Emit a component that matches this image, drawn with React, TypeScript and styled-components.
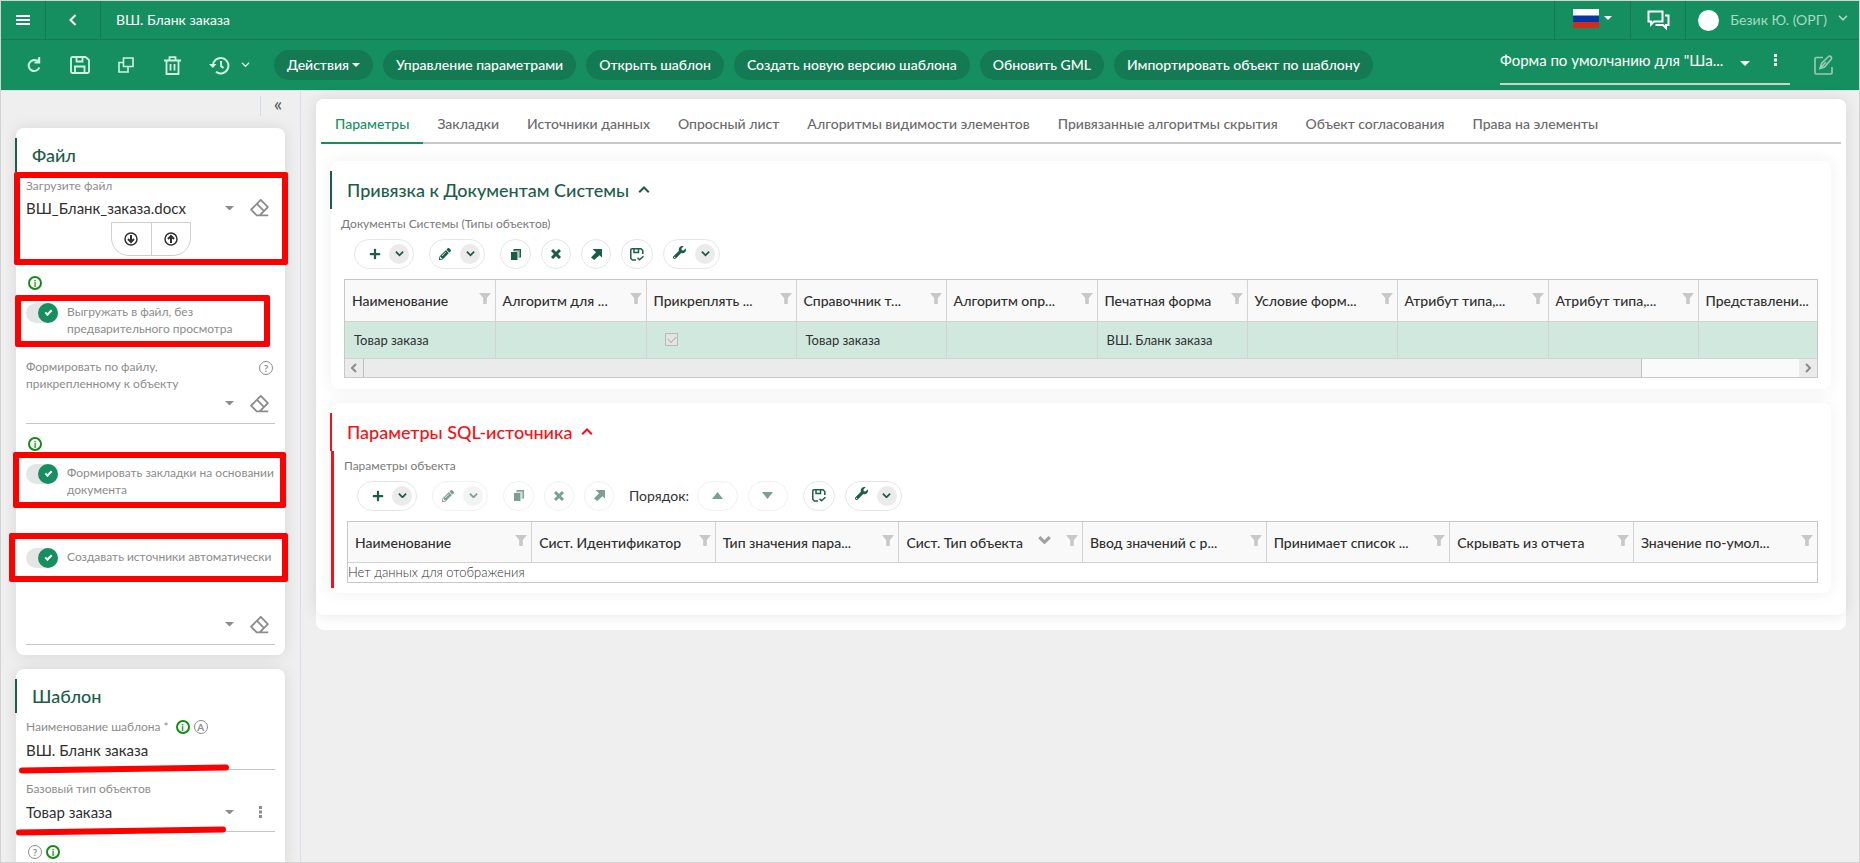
import React from 'react';
import styled, { createGlobalStyle, css } from 'styled-components';
import { FaPlus, FaPencilAlt, FaWrench } from 'react-icons/fa';
import { RiEraserLine } from 'react-icons/ri';

const green = '#168f60';
const pillGreen = '#137a53';
const darkGreen = '#1c5d48';
const mint = '#cdf5e1';
const grey = '#8c8c8c';
const line = '#d3d3d3';
const alarm = '#f90f14';
const marker = '#fe0000';

const Global = createGlobalStyle`
  *, *::before, *::after { box-sizing: border-box; }
  body { margin: 0; background: #efefef; color: #303030; font: 400 14px/20px Lato, Roboto, sans-serif; }
  button, input, select { font: inherit; color: inherit; background: none; border: 0; padding: 0; margin: 0; outline: 0; }
  select { appearance: none; cursor: pointer; }
  button { cursor: pointer; }
  h2, p { margin: 0; }
  svg { display: block; flex: none; }
`;

/* ---------- icons ---------- */

const Chevron = ({ size = 10, width = 2, up = false }: { size?: number; width?: number; up?: boolean }) => (
  <svg width={size} height={size * 0.6} viewBox="0 0 10 6" fill="none" stroke="currentColor" strokeWidth={width}>
    <path d={up ? 'M1 5.2 5 1.2l4 4' : 'M1 .8l4 4 4-4'} />
  </svg>
);
const Caret = ({ size = 8 }: { size?: number }) => (
  <svg width={size} height={size / 2} viewBox="0 0 8 4" fill="currentColor"><path d="M0 0h8L4 4z" /></svg>
);
const Dots = () => (
  <svg width="3" height="12" viewBox="0 0 3 12" fill="currentColor">
    <path d="M0 0h3v3H0zM0 4.500h3v3H0zM0 9h3v3H0z" />
  </svg>
);
const Stroke = ({ w = 20, h = 20, width = 2, children }: { w?: number; h?: number; width?: number; children: React.ReactNode }) => (
  <svg width={w} height={h} viewBox={`0 0 ${w} ${h}`} fill="none" stroke="currentColor" strokeWidth={width}>{children}</svg>
);
const Menu = () => <Stroke w={14} h={12} width={2}><path d="M0 2h14M0 6h14M0 10h14" /></Stroke>;
const Back = () => <Stroke w={8} h={12} width={2}><path d="M6.500 1 1.500 6l5 5" /></Stroke>;
const Refresh = () => (
  <Stroke w={14} h={16}><path d="M10.500 4.200A5.500 5.500 0 1 0 12.300 10.500" /><path d="M12.200 0v5.500H7.500M11.500 2v3" /></Stroke>
);
const Save = () => (
  <Stroke w={20} h={18} width={1.8}>
    <path d="M1 2.500A1.500 1.500 0 0 1 2.500 1h13L19 4v11.500A1.500 1.500 0 0 1 17.500 17h-15A1.500 1.500 0 0 1 1 15.500zM6.500 1v4.500h6V1M5 17v-6.500h9.500V17" />
  </Stroke>
);
const Copy = () => <Stroke w={16} h={16} width={1.6}><path d="M5.500 1h9.500v8.500H5.500zM5.500 5.500H1V15h9V9.500" /></Stroke>;
const Trash = () => <Stroke w={17} h={19} width={1.8}><path d="M0 4.500h17M2.500 4.500V18h12V4.500M5.500 4V1.200h6V4M6.500 8v6.500M10.500 8v6.500" /></Stroke>;
const History = () => (
  <Stroke w={21} h={19}>
    <path d="M4 10a7.700 7.700 0 1 1 3 5.800M12 5v5l2.500 2" /><path d="M0 8h7.500L3.800 12z" fill="currentColor" stroke="none" />
  </Stroke>
);
const Chat = () => (
  <Stroke w={23} h={20}>
    <path d="M1.500 1.500h14v10H7L4 14.500v-3H1.500z" /><path d="M18 5.500h3.500V15H19v3l-3-3H9.500v-1" />
  </Stroke>
);
const Edit = () => (
  <Stroke w={19} h={20} width={1.6}>
    <path d="M9 2.500H2a1 1 0 0 0-1 1V18a1 1 0 0 0 1 1h15a1 1 0 0 0 1-1v-6" />
    <path d="M6 13.500l1.500-5L14.500 1.500q1.500-1 2.500.2t.2 2.500L10.500 12zM6 13.500 12 7" />
  </Stroke>
);
const Flag = () => (
  <svg width="26" height="19" viewBox="0 0 26 19">
    <path fill="#fff" d="M0 0h26v7H0z" /><path fill="#0039a6" d="M0 6.500h26v7H0z" /><path fill="#d52b1e" d="M0 13h26v6H0z" />
  </svg>
);
const CopySolid = () => (
  <svg width="10" height="11" viewBox="0 0 10 11" fill="currentColor">
    <path d="M0 3h6.500v8H0z" /><path d="M2.500 0H10v8.500H7.500V7.500H9V1.500H3.500V2.500h-1z" /><path d="M4 1.500h5v6H7.500v-5H4z" opacity=".6" />
  </svg>
);
const Cross = () => <Stroke w={10} h={10} width={3}><path d="M1 1l8 8M9 1 1 9" /></Stroke>;
const ArrowOut = () => (
  <svg width="11" height="11" viewBox="0 0 11 11">
    <path fill="currentColor" d="M1.500 0H11v8.500L8.500 6.200 3.200 11 0 8.500 5 3.200z" />
  </svg>
);
const SaveCheck = () => (
  <Stroke w={14} h={13} width={1.5}>
    <path d="M6 12H2.500L.8 10.500V2q0-1.200 1.200-1.200h9L12.800 2.500V6M4 1v3.500h4.500V1M7.500 9.800l2 2 4-3.600" />
  </Stroke>
);
const ArrowRound = ({ up = false }: { up?: boolean }) => (
  <Stroke w={14} h={14} width={1.5}>
    <circle cx="7" cy="7" r="6" /><path strokeWidth="2" d={up ? 'M7 11V4M4 7l3-3 3 3' : 'M7 3v7M4 7l3 3 3-3'} />
  </Stroke>
);
const Triangle = ({ up = false }: { up?: boolean }) => (
  <svg width="11" height="7" viewBox="0 0 11 7"><path fill="currentColor" d={up ? 'M0 7h11L5.500 0z' : 'M0 0h11L5.500 7z'} /></svg>
);
const Funnel = () => (
  <svg width="12" height="11" viewBox="0 0 12 11"><path fill="currentColor" d="M0 0h12L7.800 5v6H4.200V5z" /></svg>
);

/* ---------- header ---------- */

const Shell = styled.div`
  height: 100vh;
  display: flex;
  flex-direction: column;
  overflow: hidden;
  border: 1px solid ${line};
`;
const TopBar = styled.header`
  flex: none;
  height: 39px;
  display: flex;
  background: ${green};
  color: #fff;
  border-bottom: 1px solid ${pillGreen};
`;
const TopCell = styled.button<{ $w: number; $left?: boolean }>`
  width: ${p => p.$w}px;
  display: flex;
  align-items: center;
  justify-content: center;
  gap: 5px;
  ${p => (p.$left ? 'border-left' : 'border-right')}: 1px solid ${pillGreen};
`;
const PageName = styled.div`
  flex: 1;
  align-self: center;
  padding-left: 15px;
`;
const CaretLift = styled.span`
  padding-bottom: 5px;
`;
const FlagCell = styled(TopCell)`
  padding-bottom: 4px;
`;
const User = styled.button`
  display: flex;
  align-items: center;
  gap: 11px;
  padding: 0 11px 0 12px;
  border-left: 1px solid ${pillGreen};
  color: #a9d9c4;
`;
const UserName = styled.span`
  font-size: 14px;
`;
const Avatar = styled.span`
  width: 21px;
  height: 21px;
  border-radius: 50%;
  background: #fff;
`;
const ActionBar = styled.div`
  flex: none;
  height: 51px;
  display: flex;
  align-items: center;
  background: ${green};
  color: #fff;
  border-bottom: 1px solid #dae1ec;
`;
const IconTools = styled.div`
  display: flex;
  align-items: center;
  padding-left: 10px;
  width: 273px;
`;
const IconTool = styled.button<{ $wide?: boolean }>`
  width: ${p => (p.$wide ? 68 : 46)}px;
  height: 32px;
  display: flex;
  align-items: center;
  justify-content: center;
  gap: 11px;
  color: ${mint};
`;
const Pills = styled.div`
  display: flex;
  gap: 10px;
`;
const Pill = styled.button`
  height: 30px;
  padding: 0 13px;
  border-radius: 15px;
  background: ${pillGreen};
  font-weight: 500;
  white-space: nowrap;
  display: flex;
  align-items: center;
  gap: 3px;
`;
const FormPicker = styled.div`
  margin-left: auto;
  width: 290px;
  height: 40px;
  padding: 0 13px 8px 0;
  display: flex;
  align-items: center;
  border-bottom: 2px solid #c9d3cd;
`;
const FormSelect = styled.select`
  flex: 1;
  min-width: 0;
  font-size: 15px;
`;
const PickerIcons = styled.div`
  display: flex;
  align-items: center;
  gap: 24px;
`;
const CaretDrop = styled.span`
  padding-top: 6px;
`;
const EditButton = styled.button`
  margin: 0 26px 0 24px;
  opacity: 0.55;
`;

/* ---------- sidebar ---------- */

const Body = styled.div`
  flex: 1;
  min-height: 0;
  display: flex;
`;
const Sidebar = styled.aside`
  flex: none;
  width: 300px;
  padding: 0 15px;
  overflow: hidden;
  border-right: 1px solid #d9dfe9;
`;
const CollapseRow = styled.div`
  height: 37px;
  display: flex;
  justify-content: flex-end;
  padding-top: 5px;
`;
const Collapse = styled.button`
  width: 25px;
  height: 20px;
  border-left: 1px solid #d3dbe8;
  font-size: 20px;
  line-height: 14px;
  padding: 0 0 6px 10px;
  color: #555;
`;
const SideCard = styled.section`
  border-radius: 8px;
  background: #fff;
  padding: 10px 0;
  margin-bottom: 14px;
  box-shadow: 0 0 15px rgba(0, 0, 0, 0.1);
`;
const SideTitle = styled.h2`
  margin-left: -1px;
  border-left: 2px solid ${darkGreen};
  padding-left: 15px;
  font-size: 18px;
  font-weight: 500;
  line-height: 34px;
  color: ${darkGreen};
`;
const SideBody = styled.div`
  padding: 0 10px;
`;
const small = css`
  font-size: 12px;
  line-height: 17px;
  color: ${grey};
`;
const Label = styled.label`
  ${small}
`;
const LabelRow = styled.div<{ $top?: number }>`
  display: flex;
  justify-content: space-between;
  padding-top: ${p => p.$top ?? 5}px;
`;
const InlineLabel = styled.div`
  display: flex;
  align-items: center;
  gap: 5px;
  padding-top: 5px;
  height: 22px;
`;
const ControlRow = styled.div<{ $h: number; $line?: boolean; $low?: boolean; $top?: number }>`
  display: flex;
  align-items: center;
  height: ${p => p.$h}px;
  margin-top: ${p => p.$top ?? 0}px;
  padding-right: 4px;
  color: ${grey};
  ${p => p.$line && css`
    padding-bottom: ${p.$low ? 4 : 8}px;
    border-bottom: 1px solid #c6c6c6;
  `}
`;
const valueText = css`
  flex: 1;
  min-width: 0;
  font-size: 15px;
  color: #303030;
`;
const ValueSelect = styled.select`
  ${valueText}
`;
const ValueInput = styled.input`
  ${valueText}
`;
const RowIcon = styled.button`
  width: 37px;
  display: flex;
  justify-content: flex-end;
`;
const DotsButton = styled.button`
  width: 37px;
  display: flex;
  justify-content: center;
  padding-left: 15px;
`;
const Transfer = styled.div`
  display: flex;
  width: 80px;
  height: 34px;
  margin-left: 85px;
  border: 1px solid #cfcfcf;
  border-radius: 0 0 18px 18px;
`;
const TransferButton = styled.button`
  flex: 1;
  display: flex;
  align-items: center;
  justify-content: center;
  & + & { border-left: 1px solid #cfcfcf; }
`;
const HintRow = styled.div<{ $top?: number }>`
  display: flex;
  gap: 4px;
  padding-left: 2px;
  margin-top: ${p => p.$top ?? 0}px;
`;
const Hint = styled.span<{ $info?: boolean }>`
  flex: none;
  width: 14px;
  height: 14px;
  border-radius: 50%;
  border: ${p => (p.$info ? '2px solid #138c13' : '1px solid #8c8c8c')};
  color: ${p => (p.$info ? '#138c13' : '#8c8c8c')};
  display: flex;
  align-items: center;
  justify-content: center;
  font-size: 10px;
  font-weight: 700;
  line-height: 10px;
`;
const HelpHint = styled(Hint)`
  margin: 3px 2px 0 0;
`;
const SwitchRow = styled.label<{ $top: number }>`
  ${small}
  display: flex;
  align-items: flex-start;
  gap: 9px;
  min-height: 34px;
  margin: ${p => p.$top}px -8px 0 0;
`;
const Switch = styled.input`
  appearance: none;
  flex: none;
  position: relative;
  width: 32px;
  height: 20px;
  border-radius: 10px;
  background: #e2e6e7;
  &::before {
    content: '';
    position: absolute;
    inset: 0 0 0 12px;
    border-radius: 50%;
    background: ${green};
  }
  &::after {
    content: '';
    position: absolute;
    left: 19px;
    top: 7px;
    width: 7px;
    height: 4px;
    border: solid #fff;
    border-width: 0 0 2px 2px;
    transform: rotate(-45deg);
  }
`;

/* Hand-drawn red marks lying over the form */
const Marked = styled.div`
  position: relative;
`;
const Frame = styled.span<{ $box: string }>`
  position: absolute;
  z-index: 2;
  inset: ${p => p.$box};
  border: 6px solid ${marker};
  border-radius: 2px;
  pointer-events: none;
`;
const Underline = styled.svg`
  position: absolute;
  z-index: 2;
  left: -12px;
  bottom: -6px;
  pointer-events: none;
`;
const RedStroke = ({ shift = 0 }: { shift?: number }) => (
  <Underline width="216" height="14" viewBox="0 0 216 14">
    <path d={`M${5 + shift} 8.500 L${209 + shift} 5.500`} stroke={marker} strokeWidth="6" strokeLinecap="round" />
  </Underline>
);

/* ---------- main area ---------- */

const Main = styled.main`
  flex: 1;
  min-width: 0;
  padding: 8px 13px 0 15px;
`;
const OuterCard = styled.div`
  border-radius: 8px;
  background: #fff;
  padding-bottom: 15px;
`;
const MainCard = styled.div`
  border-radius: 8px;
  background: #fff;
  padding-bottom: 22px;
  box-shadow: 0 0 15px rgba(0, 0, 0, 0.1);
`;
const Tabs = styled.nav`
  display: flex;
  margin: 0 5px;
  padding-top: 4px;
  border-bottom: 2px solid #c8c8c8;
`;
const Tab = styled.a<{ $active?: boolean }>`
  padding: 11px 14px 8px;
  margin-bottom: -2px;
  font-weight: 500;
  text-decoration: none;
  white-space: nowrap;
  color: ${p => (p.$active ? green : '#6a6a6a')};
  border-bottom: 2px solid ${p => (p.$active ? green : 'transparent')};
`;
const Group = styled.section`
  margin: 17px 15px 0;
  padding: 10px 0 11px;
  border-radius: 8px;
  background: #fff;
  box-shadow: 0 0 15px rgba(50, 80, 70, 0.09);
  & + & { margin-top: 14px; padding-bottom: 5px; }
`;
const GroupTitle = styled.h2<{ $alarm?: boolean }>`
  display: flex;
  align-items: center;
  gap: 9px;
  height: 38px;
  margin-left: -1px;
  padding-left: 15px;
  border-left: 2px solid;
  font-size: 18px;
  font-weight: 500;
  color: ${p => (p.$alarm ? alarm : darkGreen)};
`;
const GroupBody = styled.div<{ $alarm?: boolean }>`
  padding: 6px 13px 0 10px;
  ${p => p.$alarm && css`
    border-left: 3px solid ${alarm};
    padding-bottom: 5px;
  `}
`;
const Caption = styled.p`
  ${small}
  color: #7a7a7a;
`;
const Tools = styled.div`
  display: flex;
  align-items: center;
  margin: 7px 0 10px 13px;
  color: ${darkGreen};
`;
const Tool = styled.button<{ $w: number; $gap?: number }>`
  width: ${p => p.$w}px;
  height: 30px;
  margin-right: ${p => p.$gap ?? 10}px;
  border: 1px solid #e6e6e6;
  border-radius: 15px;
  display: flex;
  align-items: center;
  justify-content: center;
  &:disabled { opacity: 0.58; }
`;
const SplitTool = styled(Tool)`
  justify-content: space-between;
  padding: 0 4px 0 9px;
`;
const AddTool = styled(SplitTool)`
  padding-left: 14px;
`;
const Drop = styled.span`
  width: 20px;
  height: 20px;
  border-radius: 50%;
  background: #ebebeb;
  display: flex;
  align-items: center;
  justify-content: center;
`;
const Order = styled.span`
  margin: 0 8px 0 5px;
  color: #333;
`;
const Lift = styled.span`
  padding-bottom: 4px;
`;
const GridFrame = styled.div`
  margin-left: 3px;
  border: 1px solid #c8c8c8;
  overflow: hidden;
`;
const Table = styled.table`
  width: 100%;
  table-layout: fixed;
  border-collapse: collapse;
`;
const Th = styled.th<{ $w?: number }>`
  width: ${p => (p.$w ? `${p.$w}px` : 'auto')};
  height: 41px;
  padding: 0 4px 0 7px;
  background: #f9f9f9;
  border-bottom: 1px solid ${line};
  font-weight: 500;
  text-align: left;
  white-space: nowrap;
  & + & { border-left: 1px solid ${line}; }
`;
const ThInner = styled.div`
  display: flex;
  align-items: center;
  justify-content: space-between;
`;
const ThText = styled.span`
  flex: 1;
  padding-top: 2px;
`;
const FilterMark = styled.span`
  padding-bottom: 3px;
  color: #c8c8c8;
`;
const SortMark = styled.span`
  padding: 0 15px 3px 0;
  color: #a0a0a0;
`;
const Td = styled.td`
  height: 37px;
  padding: 0 0 0 9px;
  background: #d1e8df;
  font-size: 13px;
  border-bottom: 1px solid ${line};
  & + & { border-left: 1px solid ${line}; }
`;
const EmptyTd = styled.td`
  height: 19px;
  padding: 0;
  font-size: 13px;
  font-weight: 300;
  line-height: 19px;
`;
const Tick = styled.input`
  appearance: none;
  display: block;
  position: relative;
  width: 13px;
  height: 13px;
  margin-left: 9px;
  border: 1px solid #b9b9b9;
  background: #e4e4e4;
  &::after {
    content: '';
    position: absolute;
    left: 2px;
    top: 2px;
    width: 8px;
    height: 5px;
    border: solid #b0b0b0;
    border-width: 0 0 1px 1px;
    transform: rotate(-45deg);
  }
`;
const Scroll = styled.div`
  display: flex;
  height: 18px;
  background: #fafafa;
  color: #8c8c8c;
`;
const ScrollEnd = styled.button`
  width: 18px;
  display: flex;
  align-items: center;
  justify-content: center;
  background: #ebebeb;
`;
const Thumb = styled.div`
  flex: 0 1 1279px;
  background: #ebebeb;
  border: solid #c0c0c0;
  border-width: 0 1px;
  margin-right: auto;
`;
const ScrollIcon = ({ right = false }: { right?: boolean }) => (
  <Stroke w={6} h={10}><path d={right ? 'M1 1l4 4-4 4' : 'M5 1 1 5l4 4'} /></Stroke>
);

/* ---------- data ---------- */

const tabs = ['Параметры', 'Закладки', 'Источники данных', 'Опросный лист', 'Алгоритмы видимости элементов',
  'Привязанные алгоритмы скрытия', 'Объект согласования', 'Права на элементы'];
const pills = ['Управление параметрами', 'Открыть шаблон', 'Создать новую версию шаблона', 'Обновить GML', 'Импортировать объект по шаблону'];
const docColumns = ['Наименование', 'Алгоритм для ...', 'Прикреплять ...', 'Справочник т...', 'Алгоритм опр...', 'Печатная форма',
  'Условие форм...', 'Атрибут типа,...', 'Атрибут типа,...', 'Представлени...'];
const docRow = ['Товар заказа', '', 'tick', 'Товар заказа', '', 'ВШ. Бланк заказа', '', '', '', ''];
const sqlColumns = ['Наименование', 'Сист. Идентификатор', 'Тип значения пара...', 'Сист. Тип объекта', 'Ввод значений с р...',
  'Принимает список ...', 'Скрывать из отчета', 'Значение по-умол...'];

const Filter = () => <FilterMark><Funnel /></FilterMark>;

const ToolSet = ({ locked = false }: { locked?: boolean }) => (
  <Tools>
    <AddTool $w={60} $gap={15} aria-label="Добавить"><FaPlus size={12} /><Drop><Chevron size={9} /></Drop></AddTool>
    <SplitTool $w={56} $gap={15} disabled={locked} aria-label="Изменить"><FaPencilAlt size={12} /><Drop><Chevron size={9} /></Drop></SplitTool>
    <Tool $w={31} disabled={locked} aria-label="Копировать"><CopySolid /></Tool>
    <Tool $w={30} disabled={locked} aria-label="Удалить"><Cross /></Tool>
    <Tool $w={30} disabled={locked} aria-label="Открыть"><ArrowOut /></Tool>
    {locked && (
      <>
        <Order>Порядок:</Order>
        <Tool $w={41} disabled aria-label="Выше"><Triangle up /></Tool>
        <Tool $w={40} $gap={15} disabled aria-label="Ниже"><Triangle /></Tool>
      </>
    )}
    <Tool $w={32} aria-label="Сохранить"><SaveCheck /></Tool>
    <SplitTool $w={57} aria-label="Настройки"><Lift><FaWrench size={13} /></Lift><Drop><Chevron size={9} /></Drop></SplitTool>
  </Tools>
);

const Clear = () => <RowIcon aria-label="Очистить"><RiEraserLine size={22} /></RowIcon>;

export default function App() {
  return (
    <Shell>
      <Global />
      <TopBar>
        <TopCell $w={45} aria-label="Меню"><Menu /></TopCell>
        <TopCell $w={55} aria-label="Назад"><Back /></TopCell>
        <PageName>ВШ. Бланк заказа</PageName>
        <FlagCell $w={76} $left aria-label="Язык"><Flag /><Caret /></FlagCell>
        <TopCell $w={55} $left aria-label="Сообщения"><Chat /></TopCell>
        <User><Avatar /><UserName>Безик Ю. (ОРГ)</UserName><CaretLift><Chevron size={10} width={1.6} /></CaretLift></User>
      </TopBar>
      <ActionBar>
        <IconTools>
          <IconTool aria-label="Обновить"><Refresh /></IconTool>
          <IconTool aria-label="Сохранить"><Save /></IconTool>
          <IconTool aria-label="Копировать"><Copy /></IconTool>
          <IconTool aria-label="Удалить"><Trash /></IconTool>
          <IconTool $wide aria-label="История"><History /><Chevron size={9} width={1.5} /></IconTool>
        </IconTools>
        <Pills>
          <Pill>Действия <Caret /></Pill>
          {pills.map(p => <Pill key={p}>{p}</Pill>)}
        </Pills>
        <FormPicker>
          <FormSelect aria-label="Форма"><option>Форма по умолчанию для "Ша...</option></FormSelect>
          <PickerIcons><CaretDrop><Caret size={10} /></CaretDrop><Dots /></PickerIcons>
        </FormPicker>
        <EditButton aria-label="Редактировать форму"><Edit /></EditButton>
      </ActionBar>

      <Body>
        <Sidebar>
          <CollapseRow><Collapse aria-label="Свернуть">«</Collapse></CollapseRow>
          <SideCard>
            <SideTitle>Файл</SideTitle>
            <SideBody>
              <Marked>
                <Frame $box="0 -13px -9px -12px" />
                <LabelRow><Label htmlFor="file">Загрузите файл</Label></LabelRow>
                <ControlRow $h={28}>
                  <ValueSelect id="file"><option>ВШ_Бланк_заказа.docx</option></ValueSelect>
                  <Caret size={9} /><Clear />
                </ControlRow>
                <Transfer>
                  <TransferButton aria-label="Скачать"><ArrowRound /></TransferButton>
                  <TransferButton aria-label="Загрузить"><ArrowRound up /></TransferButton>
                </Transfer>
              </Marked>
              <HintRow $top={20}><Hint $info>i</Hint></HintRow>
              <Marked>
                <Frame $box="-8px 5px -10px -11px" />
                <SwitchRow $top={13}>
                  <Switch type="checkbox" role="switch" defaultChecked />
                  <span>Выгружать в файл, без<br />предварительного просмотра</span>
                </SwitchRow>
              </Marked>
              <LabelRow $top={21}>
                <Label htmlFor="attached">Формировать по файлу,<br />прикрепленному к объекту</Label>
                <HelpHint>?</HelpHint>
              </LabelRow>
              <ControlRow $h={32} $line>
                <ValueSelect id="attached"><option></option></ValueSelect>
                <Caret size={9} /><Clear />
              </ControlRow>
              <HintRow $top={13}><Hint $info>i</Hint></HintRow>
              <Marked>
                <Frame $box="-12px -11px -10px -13px" />
                <SwitchRow $top={13}>
                  <Switch type="checkbox" role="switch" defaultChecked />
                  <span>Формировать закладки на основании<br />документа</span>
                </SwitchRow>
              </Marked>
              <Marked>
                <Frame $box="-15px -13px 0 -17px" />
                <SwitchRow $top={50}>
                  <Switch type="checkbox" role="switch" defaultChecked />
                  <span>Создавать источники автоматически</span>
                </SwitchRow>
              </Marked>
              <ControlRow $h={32} $line $top={31}>
                <ValueSelect aria-label="Источник"><option></option></ValueSelect>
                <Caret size={9} /><Clear />
              </ControlRow>
            </SideBody>
          </SideCard>
          <SideCard>
            <SideTitle>Шаблон</SideTitle>
            <SideBody>
              <Marked>
                <InlineLabel>
                  <Label htmlFor="name">Наименование шаблона *</Label>
                  <HintRow><Hint $info>i</Hint><Hint>A</Hint></HintRow>
                </InlineLabel>
                <ControlRow $h={35} $line $low><ValueInput id="name" defaultValue="ВШ. Бланк заказа" /></ControlRow>
                <RedStroke shift={3} />
              </Marked>
              <Marked>
                <LabelRow $top={10}><Label htmlFor="base">Базовый тип объектов</Label></LabelRow>
                <ControlRow $h={35} $line $low>
                  <ValueSelect id="base"><option>Товар заказа</option></ValueSelect>
                  <Caret size={9} /><DotsButton aria-label="Ещё"><Dots /></DotsButton>
                </ControlRow>
                <RedStroke />
              </Marked>
              <HintRow $top={13}><Hint>?</Hint><Hint $info>i</Hint></HintRow>
            </SideBody>
          </SideCard>
        </Sidebar>

        <Main>
          <OuterCard>
            <MainCard>
              <Tabs>{tabs.map((t, i) => <Tab key={t} href="#" $active={i === 0}>{t}</Tab>)}</Tabs>
              <Group>
                <GroupTitle>Привязка к Документам Системы <Chevron size={12} width={1.7} up /></GroupTitle>
                <GroupBody>
                  <Caption>Документы Системы (Типы объектов)</Caption>
                  <ToolSet />
                  <GridFrame>
                    <Table>
                      <thead>
                        <tr>
                          {docColumns.map((c, i) => (
                            <Th key={i} $w={i === 9 ? undefined : i % 3 === 1 ? 151 : 150}>
                              <ThInner><ThText>{c}</ThText>{i < 9 && <Filter />}</ThInner>
                            </Th>
                          ))}
                        </tr>
                      </thead>
                      <tbody>
                        <tr>
                          {docRow.map((v, i) => (
                            <Td key={i}>{v === 'tick' ? <Tick type="checkbox" defaultChecked disabled aria-label="Прикреплять" /> : v}</Td>
                          ))}
                        </tr>
                      </tbody>
                    </Table>
                    <Scroll>
                      <ScrollEnd aria-label="Влево"><ScrollIcon /></ScrollEnd>
                      <Thumb />
                      <ScrollEnd aria-label="Вправо"><ScrollIcon right /></ScrollEnd>
                    </Scroll>
                  </GridFrame>
                </GroupBody>
              </Group>
              <Group>
                <GroupTitle $alarm>Параметры SQL-источника <Chevron size={12} width={1.7} up /></GroupTitle>
                <GroupBody $alarm>
                  <Caption>Параметры объекта</Caption>
                  <ToolSet locked />
                  <GridFrame>
                    <Table>
                      <thead>
                        <tr>
                          {sqlColumns.map((c, i) => (
                            <Th key={c}>
                              <ThInner>
                                <ThText>{c}</ThText>
                                {i === 3 && <SortMark><Chevron size={13} width={2.4} /></SortMark>}
                                <Filter />
                              </ThInner>
                            </Th>
                          ))}
                        </tr>
                      </thead>
                      <tbody><tr><EmptyTd colSpan={8}>Нет данных для отображения</EmptyTd></tr></tbody>
                    </Table>
                  </GridFrame>
                </GroupBody>
              </Group>
            </MainCard>
          </OuterCard>
        </Main>
      </Body>
    </Shell>
  );
}
